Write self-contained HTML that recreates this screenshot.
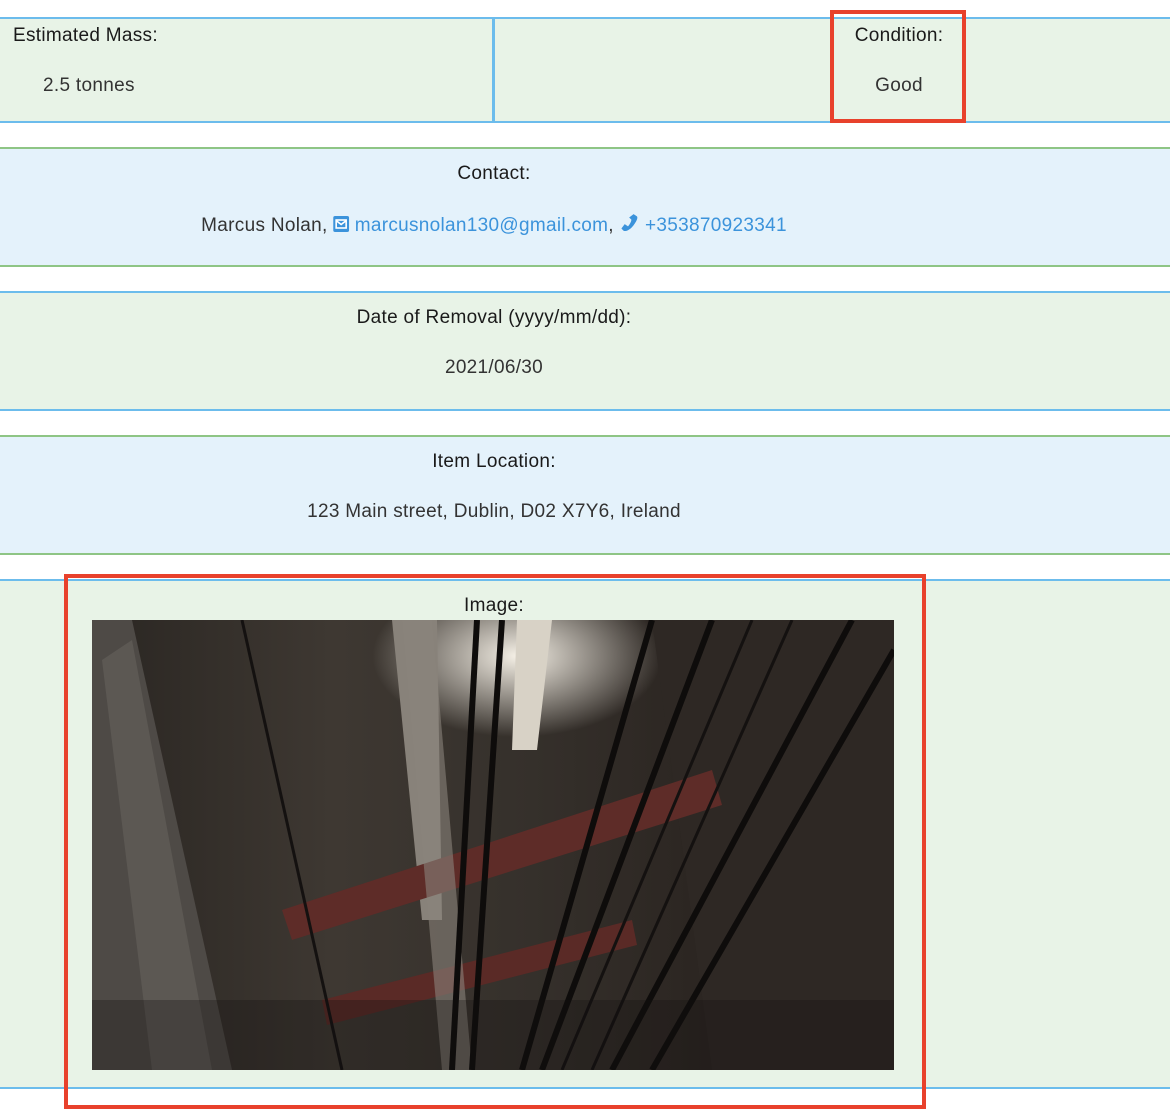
<!DOCTYPE html>
<html><head><meta charset="utf-8"><style>
*{margin:0;padding:0;box-sizing:border-box}
body{width:1170px;height:1116px;position:relative;background:#fff;font-family:"Liberation Sans",sans-serif;color:#222;overflow:hidden}
.row{position:absolute;left:0;width:1170px}
.g{background:#e8f3e7}
.b{background:#e4f2fb}
.bb{border-top:2px solid #6cbcec;border-bottom:2px solid #6cbcec}
.gb{border-top:2px solid #8ec585;border-bottom:2px solid #8ec585}
.t{position:absolute;font-size:19px;white-space:nowrap;letter-spacing:0.3px}
.l{color:#1a1a1a}
.v{color:#333;font-weight:normal}
.c{transform:translateX(-50%)}
a{color:#3b93db;text-decoration:none}
.red{position:absolute;border:4px solid #e8412c}
</style></head><body>
<div class="row g bb" style="top:17px;height:106px"></div>
<div style="position:absolute;left:492px;top:19px;width:3px;height:102px;background:#6cbcec"></div>
<div class="t l" style="left:13px;top:25px">Estimated Mass:</div>
<div class="t v" style="left:43px;top:75px">2.5 tonnes</div>
<div class="t l c" style="left:899px;top:25px">Condition:</div>
<div class="t v c" style="left:899px;top:75px">Good</div>

<div class="row b gb" style="top:147px;height:120px"></div>
<div class="t l c" style="left:494px;top:163px">Contact:</div>
<div class="t v c" style="left:494px;top:213px">Marcus Nolan, <svg width="16" height="16" viewBox="0 0 16 16" style="vertical-align:-1px"><rect x="0" y="0" width="16" height="16" rx="2" fill="#3b93db"/><rect x="3" y="4" width="10" height="8" fill="none" stroke="#fff" stroke-width="1.6"/><path d="M3.5 5 L8 8.5 L12.5 5" fill="none" stroke="#fff" stroke-width="1.6"/></svg> <a>marcusnolan130@gmail.com</a>, <svg width="20" height="20" viewBox="0 0 18 18" style="vertical-align:-2px"><path d="M13 1 L16 3 C17 4 16 7 13 11 C10 15 6 17 4 16 L2 14 L5 10 L8 12 C9 11 11 8 11 6 L9 4 Z" fill="#3b93db"/></svg> <a>+353870923341</a></div>

<div class="row g bb" style="top:291px;height:120px"></div>
<div class="t l c" style="left:494px;top:307px">Date of Removal (yyyy/mm/dd):</div>
<div class="t v c" style="left:494px;top:357px">2021/06/30</div>

<div class="row b gb" style="top:435px;height:120px"></div>
<div class="t l c" style="left:494px;top:451px">Item Location:</div>
<div class="t v c" style="left:494px;top:501px">123 Main street, Dublin, D02 X7Y6, Ireland</div>

<div class="row g bb" style="top:579px;height:510px"></div>
<div class="t l c" style="left:494px;top:595px">Image:</div>
<svg style="position:absolute;left:92px;top:620px" width="802" height="450" viewBox="0 0 802 450">
<defs>
<linearGradient id="bg" x1="0" y1="0" x2="1" y2="0"><stop offset="0" stop-color="#2a2622"/><stop offset=".3" stop-color="#3e3832"/><stop offset=".55" stop-color="#35302b"/><stop offset=".75" stop-color="#2c2622"/><stop offset="1" stop-color="#1e1a18"/></linearGradient>
<radialGradient id="lt" cx=".53" cy=".08" r=".18"><stop offset="0" stop-color="#f5f0e6"/><stop offset="1" stop-color="#f5f0e6" stop-opacity="0"/></radialGradient>
</defs>
<rect width="802" height="450" fill="url(#bg)"/>
<rect width="802" height="450" fill="url(#lt)"/>
<polygon points="0,0 40,0 140,450 0,450" fill="#4e4a46"/>
<polygon points="10,40 40,20 120,450 60,450" fill="#6a6660" opacity=".5"/>
<polygon points="300,0 345,0 350,300 330,300" fill="#88827a"/>
<polygon points="425,0 460,0 445,130 420,130" fill="#d8d2c6"/>
<polygon points="560,0 802,0 802,450 620,450" fill="#2e2824"/>
<polygon points="190,290 620,150 630,185 200,320" fill="#5e2c28"/>
<polygon points="230,380 540,300 545,325 235,405" fill="#5a2a26"/>
<polygon points="310,0 340,0 380,450 350,450" fill="#8a847c" opacity=".6"/>
<g stroke="#0e0c0b" stroke-width="6" fill="none">
<line x1="385" y1="0" x2="360" y2="450"/><line x1="410" y1="0" x2="380" y2="450"/>
<line x1="620" y1="0" x2="450" y2="450"/><line x1="760" y1="0" x2="520" y2="450"/>
<line x1="802" y1="30" x2="560" y2="450"/><line x1="560" y1="0" x2="430" y2="450"/>
</g>
<g stroke="#141110" stroke-width="3"><line x1="700" y1="0" x2="500" y2="450"/><line x1="660" y1="0" x2="470" y2="450"/><line x1="150" y1="0" x2="250" y2="450"/></g>
<rect x="0" y="380" width="802" height="70" fill="#141110" opacity=".3"/>
</svg>

<div class="red" style="left:830px;top:10px;width:136px;height:113px"></div>
<div class="red" style="left:64px;top:574px;width:862px;height:535px"></div>
</body></html>
